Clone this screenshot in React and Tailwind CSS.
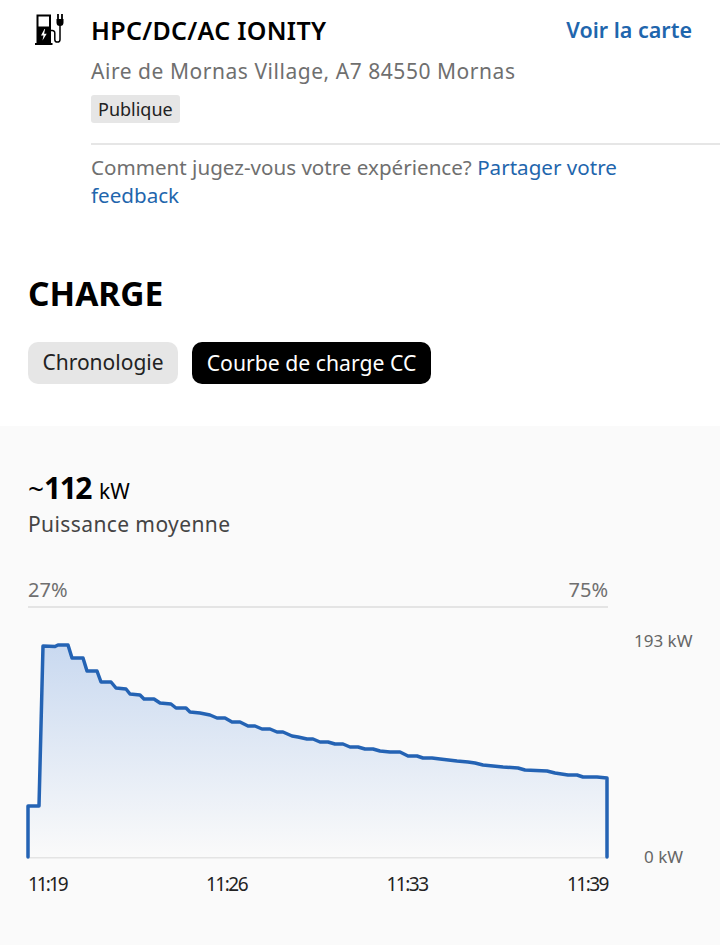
const linePoints = [
  [28, 857], [28, 806], [39, 806], [43, 646], [55, 646.5], [58, 645], [68, 645], [72, 658], [83, 658], [87, 671],
  [97, 671], [101, 682], [111, 682], [116, 688], [126, 689], [130, 694], [140, 695], [144, 699], [154, 699],
  [160, 703], [171, 704], [176, 708], [186, 708], [190, 712], [200, 713], [210, 715], [217, 718], [225, 718],
  [232, 722], [240, 722], [248, 726], [255, 726], [262, 729], [270, 729], [277, 732], [283, 732], [292, 736],
  [298, 737], [307, 739], [313, 739], [320, 742], [328, 742], [335, 744], [343, 744], [350, 747], [358, 747],
  [365, 749], [373, 749], [380, 751], [390, 752], [400, 752], [408, 756], [417, 756], [423, 758], [432, 758],
  [440, 759], [457, 761], [468, 762], [475, 763], [483, 765], [493, 766], [503, 767], [518, 768], [525, 770],
  [547, 771], [555, 773], [568, 775], [577, 775], [583, 777], [597, 777], [607, 778], [607, 857],
];

// page coords -> svg coords (svg starts at x=26, y=636)
const path = linePoints.map(([x, y]) => `${x - 26},${y - 636}`).join(' ');

function StationIcon() {
  return (
    <svg width="30" height="32" viewBox="0 0 30 32" className="shrink-0">
      <path
        fill="#000"
        fillRule="evenodd"
        d="M1.5 0.5 h14.5 v28.5 h1.5 v2 H0 v-2 H1.5 Z M3.5 2.5 v10 h10.5 v-10 Z M9.5 15 l-3.5 6.5 h2.5 l-1 5 l4.2 -6.7 h-2.6 l1 -4.8 Z"
      />
      <path d="M23 0v5 M27 0v5" stroke="#000" strokeWidth="1.8" fill="none" />
      <path d="M21.5 5h7v3.5a3.5 3.5 0 0 1-7 0Z" fill="#000" />
      <path
        d="M25 11v14.5a2.6 2.6 0 0 1-5.2 0V19a2.4 2.4 0 0 0-2.8-2.4H16"
        stroke="#000"
        strokeWidth="1.5"
        fill="none"
      />
    </svg>
  );
}

function ChargeChart() {
  return (
    <svg width="586" height="226" viewBox="0 0 586 226" className="block">
      <defs>
        <linearGradient id="fill" x1="0" y1="0" x2="0" y2="1">
          <stop offset="0" stopColor="#c9d9f0" />
          <stop offset="1" stopColor="#fafafa" />
        </linearGradient>
      </defs>
      <line x1="2" y1="221.5" x2="582" y2="221.5" stroke="#e4e4e4" strokeWidth="2" />
      <polygon points={path} fill="url(#fill)" />
      <polyline points={path} fill="none" stroke="#2463b4" strokeWidth="3.5" strokeLinejoin="round" strokeLinecap="round" />
    </svg>
  );
}

export default function App() {
  return (
    <div className="w-[720px] h-[945px] overflow-hidden bg-white font-['Noto_Sans',sans-serif]">
      <div className="flex pt-[14px]">
        <div className="w-[91px] pl-[35px] shrink-0">
          <StationIcon />
        </div>
        <div className="flex-1 min-w-0">
          <div className="flex items-start justify-between pr-[28px]">
            <h2 className="text-[25px] leading-[32px] font-semibold tracking-[0.3px] text-black">HPC/DC/AC IONITY</h2>
            <a className="text-[21.5px] leading-[32px] font-semibold text-[#1f66ad]">Voir la carte</a>
          </div>
          <p className="mt-[9px] text-[21px] leading-[32px] tracking-[0.54px] text-[#6f6f6f]">Aire de Mornas Village, A7 84550 Mornas</p>
          <span className="mt-[8px] inline-block rounded-[3px] bg-[#e6e6e6] px-[7px] text-[18px] leading-[28px] text-[#222]">
            Publique
          </span>
          <div className="mt-[20px] h-[2px] bg-[#e6e6e6]" />
          <p className="mt-[8px] pr-[90px] text-[20.6px] leading-[28px] text-[#6f6f6f]">
            Comment jugez-vous votre expérience? <a className="text-[#1f66ad]">Partager votre feedback</a>
          </p>
        </div>
      </div>

      <h1 className="mt-[62px] px-[28px] text-[33.5px] leading-[44px] font-bold text-black">CHARGE</h1>

      <div className="mt-[27px] flex gap-[14px] px-[28px]">
        <button className="h-[42px] w-[150px] rounded-[10px] bg-[#e6e6e6] text-[21px] text-[#222]">Chronologie</button>
        <button className="h-[42px] w-[239px] rounded-[10px] bg-black text-[21.2px] text-white">Courbe de charge CC</button>
      </div>

      <section className="mt-[42px] h-[519px] bg-[#fafafa] pt-[42px]">
        <div className="px-[28px]">
          <p className="h-[42px] leading-[40px] text-black">
            <span className="text-[28px]">~</span>
            <span className="text-[30px] font-bold tracking-[-1.5px]">112</span>
            <span className="ml-[8px] text-[21px]">kW</span>
          </p>
          <p className="text-[21px] leading-[28px] tracking-[0.4px] text-[#444]">Puissance moyenne</p>
          <div className="mt-[39px] flex w-[580px] justify-between border-b-2 border-[#e4e4e4] pb-[3px] text-[20px] leading-[26px] text-[#6f6f6f]">
            <span>27%</span>
            <span>75%</span>
          </div>
        </div>

        <div className="flex pl-[26px] pt-[28px]">
          <ChargeChart />
          <div className="ml-[22px] flex h-[233px] flex-col justify-between text-[17px] leading-[24px] text-[#666]">
            <span className="mt-[-7px]">193 kW</span>
            <span className="ml-[10px]">0 kW</span>
          </div>
        </div>

        <div className="mt-[2px] flex w-[636px] justify-between px-[28px] text-[19px] leading-[26px] tracking-[-1.5px] text-[#222]">
          <span className="tracking-[-2px]">11:19</span>
          <span>11:26</span>
          <span>11:33</span>
          <span>11:39</span>
        </div>
      </section>
    </div>
  );
}
